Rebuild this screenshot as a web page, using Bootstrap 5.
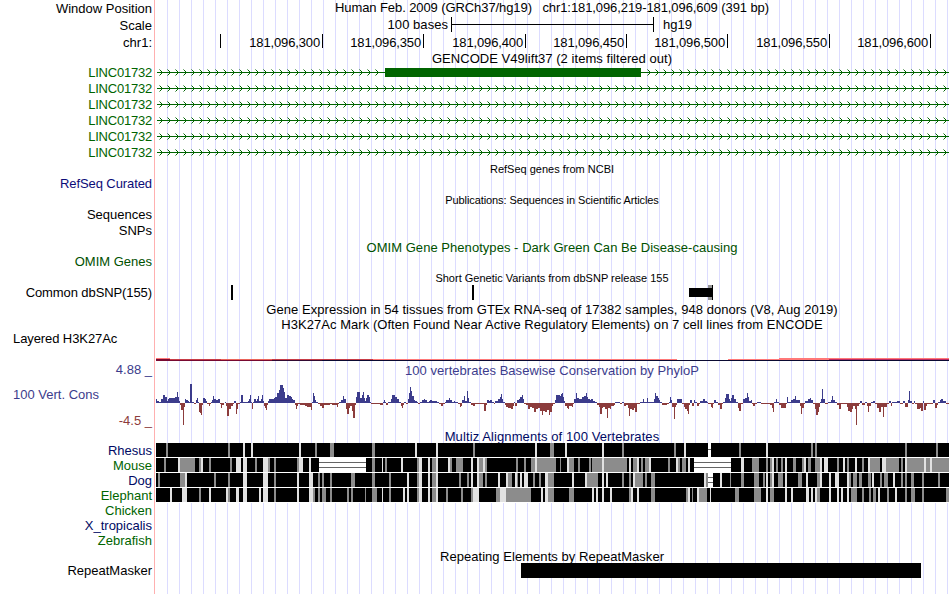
<!DOCTYPE html>
<html lang="en">
<head>
<meta charset="utf-8">
<title>Genome Browser tracks</title>
<link rel="stylesheet" href="https://cdn.jsdelivr.net/npm/bootstrap@5.3.0/dist/css/bootstrap.min.css">
<style>
body{font-family:"Liberation Sans",Arial,sans-serif;font-size:13px;color:#000;background:#fff;overflow:hidden}
.browser{width:949px;height:594px}
.trk{flex:none;white-space:pre;line-height:15px}
.lbl{width:155px;padding-right:2px;border-right:1px solid #ffb0b0;flex:none}
.raise{line-height:13px}
.plot{width:794px;flex:none;letter-spacing:.045px;background:linear-gradient(90deg,#dcdcff 1px,transparent 1px) 12px 0/12px 100%}
.plot:not(.gene):not(.align){background:linear-gradient(#fff,#fff) 0 0/1px 100% no-repeat,linear-gradient(90deg,#dcdcff 1px,transparent 1px) 12px 0/12px 100%}
.gene{background:linear-gradient(#fff,#fff) 0 0/1px 100% no-repeat,linear-gradient(90deg,#dcdcff 1px,transparent 1px) 12px 0/12px 100%}
.plot svg{display:block;shape-rendering:crispEdges}
.plot svg text{font-size:13px}
#ruler text{letter-spacing:-.14px}
.plot svg .chev{shape-rendering:auto;fill:none;stroke:#006400;stroke-width:1}
.h14{height:14px}.h15{height:15px}.h16{height:16px}.h17{height:17px}.h30{height:30px}.h50{height:50px}.h33{height:33px}
.tiny{font-size:11px;letter-spacing:0}
.tight{letter-spacing:-.09px}
.gene-id{letter-spacing:-.22px}
.loose{letter-spacing:.1px}
.green{color:#006400}.omim{color:#005000}.navy{color:#0c0c78}.multi{color:#000a64}.cons{color:#3c3c8c}.neg{color:#8c3c3c}
.inset-l{padding-left:13px}
.up1{padding-bottom:2px}
.dn1{padding-top:2px}
</style>
<script src="https://cdn.jsdelivr.net/npm/bootstrap@5.3.0/dist/js/bootstrap.bundle.min.js"></script>
</head>
<body>
<main class="browser d-flex flex-column">
 <div class="trk d-flex h17"><div class="lbl d-flex align-items-center justify-content-end">Window Position</div><div class="plot tight d-flex align-items-center justify-content-center up1"><span>Human Feb. 2009 (GRCh37/hg19)   chr1:181,096,219-181,096,609 (391 bp)</span></div></div>
 <div class="trk d-flex h17"><div class="lbl d-flex align-items-center justify-content-end">Scale</div><div class="plot"><svg width="794" height="17" viewBox="155 17 794 17"><path d="M451 17h1v15h-1zM653 17h1v15h-1zM451 24h203v1H451z"/><text x="448" y="29" text-anchor="end">100 bases</text><text x="663" y="29">hg19</text></svg></div></div>
 <div class="trk d-flex h17"><div class="lbl d-flex align-items-center justify-content-end">chr1:</div><div class="plot"><svg id="ruler" width="794" height="17" viewBox="155 34 794 17"></svg></div></div>
 <div class="trk d-flex h14"><div class="lbl"></div><div class="plot d-flex align-items-center justify-content-center">GENCODE V49lift37 (2 items filtered out)</div></div>
 <div class="trk d-flex h16 green"><div class="lbl gene-id text-end">LINC01732</div><div class="plot gene" data-exon="385,641"></div></div>
 <div class="trk d-flex h16 green"><div class="lbl gene-id text-end">LINC01732</div><div class="plot gene"></div></div>
 <div class="trk d-flex h16 green"><div class="lbl gene-id text-end">LINC01732</div><div class="plot gene"></div></div>
 <div class="trk d-flex h16 green"><div class="lbl gene-id text-end">LINC01732</div><div class="plot gene"></div></div>
 <div class="trk d-flex h16 green"><div class="lbl gene-id text-end">LINC01732</div><div class="plot gene"></div></div>
 <div class="trk d-flex h16 green"><div class="lbl gene-id text-end">LINC01732</div><div class="plot gene"></div></div>
 <div class="trk d-flex h16"><div class="lbl"></div><div class="plot d-flex align-items-center justify-content-center tiny">RefSeq genes from NCBI</div></div>
 <div class="trk d-flex h15"><div class="lbl raise tight text-end navy">RefSeq Curated</div><div class="plot"></div></div>
 <div class="trk d-flex h16"><div class="lbl"></div><div class="plot d-flex align-items-center justify-content-center tiny tight">Publications: Sequences in Scientific Articles</div></div>
 <div class="trk d-flex h15"><div class="lbl raise text-end">Sequences</div><div class="plot"></div></div>
 <div class="trk d-flex h16"><div class="lbl text-end">SNPs</div><div class="plot"></div></div>
 <div class="trk d-flex h16 omim"><div class="lbl"></div><div class="plot d-flex align-items-center justify-content-center">OMIM Gene Phenotypes - Dark Green Can Be Disease-causing</div></div>
 <div class="trk d-flex h15 omim"><div class="lbl raise text-end">OMIM Genes</div><div class="plot"></div></div>
 <div class="trk d-flex h15"><div class="lbl"></div><div class="plot d-flex align-items-center justify-content-center tiny dn1">Short Genetic Variants from dbSNP release 155</div></div>
 <div class="trk d-flex h15"><div class="lbl tight text-end">Common dbSNP(155)</div><div class="plot"><svg width="794" height="15" viewBox="155 285 794 15"><path d="M231 285h2v15h-2zM472 285h2v15h-2z"/><path fill="#969696" d="M708 285h4v15h-4z"/><path d="M689 288h24v9h-24zM712 285h1v15h-1z"/></svg></div></div>
 <div class="trk d-flex h17"><div class="lbl"></div><div class="plot d-flex align-items-center justify-content-center dn1">Gene Expression in 54 tissues from GTEx RNA-seq of 17382 samples, 948 donors (V8, Aug 2019)</div></div>
 <div class="trk d-flex h15"><div class="lbl"></div><div class="plot d-flex align-items-center justify-content-center">H3K27Ac Mark (Often Found Near Active Regulatory Elements) on 7 cell lines from ENCODE</div></div>
 <div class="trk d-flex h30"><div class="lbl raise tight inset-l">Layered H3K27Ac</div><div class="plot"><svg width="794" height="30" viewBox="155 332 794 30">
  <path fill="#ff7878" d="M156 358h14v1h-14zM373 359h304v1H373zM728 359h51v1h-51zM779 358h170v1H779zM779 359h50v1h-50z"/>
  <path fill="#780a32" d="M156 359h14v1h-14zM156 360h116v1H156z"/><path fill="#c83c46" d="M170 359h51v1h-51zM272 359h101v1H272z"/><path fill="#eb645a" d="M221 359h51v1h-51z"/><path fill="#be2864" d="M829 359h120v1H829z"/>
  <path fill="#320a32" d="M272 360h50v1h-50z"/><path fill="#0a0a32" d="M322 360h627v1H322z"/></svg></div></div>
 <div class="trk d-flex h16 cons"><div class="lbl text-end">4.88 _</div><div class="plot d-flex align-items-center justify-content-center">100 vertebrates Basewise Conservation by PhyloP</div></div>
 <div class="trk d-flex h50 cons"><div class="lbl d-flex flex-column"><div class="h33 d-flex align-items-center inset-l">100 Vert. Cons</div><div class="neg text-end dn1">-4.5 _</div></div><div class="plot"><svg id="phylop" width="794" height="50" viewBox="155 378 794 50"></svg></div></div>
 <div class="trk d-flex h15 multi"><div class="lbl"></div><div class="plot loose d-flex align-items-center justify-content-center dn1">Multiz Alignments of 100 Vertebrates</div></div>
 <div class="trk d-flex h15 multi"><div class="lbl text-end">Rhesus</div><div class="plot align"></div></div>
 <div class="trk d-flex h15 green"><div class="lbl text-end">Mouse</div><div class="plot align"></div></div>
 <div class="trk d-flex h15 multi"><div class="lbl text-end">Dog</div><div class="plot align"></div></div>
 <div class="trk d-flex h15 green"><div class="lbl text-end">Elephant</div><div class="plot align"></div></div>
 <div class="trk d-flex h15 green"><div class="lbl text-end">Chicken</div><div class="plot"></div></div>
 <div class="trk d-flex h15 multi"><div class="lbl text-end">X_tropicalis</div><div class="plot"></div></div>
 <div class="trk d-flex h15 green"><div class="lbl text-end">Zebrafish</div><div class="plot"></div></div>
 <div class="trk d-flex h15"><div class="lbl"></div><div class="plot d-flex align-items-center justify-content-center dn1">Repeating Elements by RepeatMasker</div></div>
 <div class="trk d-flex h16"><div class="lbl text-end">RepeatMasker</div><div class="plot"><svg width="794" height="16" viewBox="155 563 794 16"><path d="M521 563h400v15H521z"/></svg></div></div>
 <div class="d-flex flex-fill"><div class="lbl"></div><div class="plot"></div></div>
</main>
<script>
// ruler: one tick every 50 bases, coordinate to its left
let ruler='<path d="M220 34h1v14h-1z"/>';
[322,423,525,626,727,829,930].forEach((x,i)=>{ruler+=`<path d="M${x} 34h1v14h-1z"/><text x="${x-2}" y="47" text-anchor="end">181,096,${300+50*i}</text>`});
document.getElementById('ruler').innerHTML=ruler;

// introns with strand arrows every 8px
document.querySelectorAll('.gene').forEach(el=>{
  const ex=(el.dataset.exon||'0,0').split(',').map(Number);
  let d='';
  for(let x=162;x<949;x+=8) if(x<ex[0]-4||x>ex[1]+4) d+=`M${x-2.5} 4.5l3 3l-3 3`;
  el.innerHTML=`<svg width="794" height="16" viewBox="155 0 794 16"><path fill="#006400" d="M157 7h792v1H157z"/><path class="chev" d="${d}"/>${ex[0]?`<path fill="#006400" d="M${ex[0]} 3H${ex[1]}v9H${ex[0]}z"/>`:''}</svg>`;
});

// conservation: "offset:score" steps in thirds of a pixel from each segment's origin
const segs=[[150,"18:4 21:2 27:1 33:4 39:8 46:6 50:2 54:4 57:5 76:6 81:11 85:6 88:2 91:-2 94:-7 98:-22 102:-4 105:4 108:3 113:2 118:1 120:19 126:1 132:-1 138:3 141:5 144:1 147:-9 150:-10 153:-12 156:-2 159:5 164:4 168:2 171:-1 177:-3 180:-1 183:1 187:3 189:7 193:4 198:3 205:4 210:-1 213:-5 217:-2 222:0 225:1 228:-3 232:-13 236:-6 243:-3 250:-1 253:2 257:-11 262:-6 265:-1 271:1 274:8 280:1 294:2 297:4 300:8 303:1 306:-6 309:1 312:4 317:2 321:4 324:7 328:2 333:4 336:8 339:2 342:-3 345:-5 348:-7 351:-2 354:2 357:4 372:5 376:6 380:10 386:13 390:18 398:15 402:11 406:5 411:8 417:7 423:6 427:4 430:3 435:-2 438:-6 441:-3 444:-1 450:-2 465:-3 471:-4 483:-7 486:1 489:10 493:7 496:3 499:1 503:-1 511:-3 517:-5 523:-2 540:-1 546:-2 561:-4 564:-1 568:1 574:3 579:7 583:4 588:-6 592:-11 596:-5 600:-3 606:-8 610:-15 614:-2 617:6 621:11 629:5 636:8 639:11 642:5 646:2 649:5 652:8 658:6 661:1 664:-1 690:-2 699:1 702:3 706:1 709:-2 714:1 723:4 726:8 735:6 740:4 747:1 752:-3 756:-5 759:-2 762:1 769:-1 774:4 777:10 780:16 783:12 787:7 791:3"],
[415,"0:2 6:1 9:-1 15:1 21:3 27:4 31:3 36:1 42:2 45:3 52:2 66:1 72:-1 79:-3 84:-1 90:1 94:3 102:5 106:3 112:1 117:2 121:1 129:-1 135:-4 139:-3 142:3 147:7 151:2 156:12 159:5 162:1 168:-2 175:-3 180:-1 208:-8 213:-2 217:3 222:2 226:3 232:1 237:-1 240:2 250:4 255:6 258:9 262:4 265:1 269:-2 273:-4 280:-5 289:-6 294:-3 297:1 301:-3 306:3 312:4 316:6 321:8 325:4 328:-1 333:-2 340:-6 346:-4 352:-5 358:-9 364:-6 370:-5 375:-8 380:-12 385:-8 390:-9 397:-7 402:-12 406:-9 410:-3 415:-1 420:3 423:8 436:7 438:9 442:10 445:6 448:2 451:-3 456:-5 460:-6 463:-3 471:-4 475:-1 478:4 483:10 486:5 492:4 500:6 508:7 513:10 516:6 519:4 525:3 529:4 533:2 540:1 545:-2 552:-4 556:-11 561:-5 565:-4 570:-6 576:-15 580:-5 585:-6 589:-3 597:-2 601:1 614:-1 620:1 627:-3 633:-2 638:-5 642:-13 646:-6 651:-7 657:-5 661:-9 665:-1 675:1 684:4 688:1 696:5 700:1 717:4 720:10 724:7 728:5 732:3 736:1 742:-2 757:-1 762:1 765:6 768:3 772:-4 777:-16 781:-4 784:-2 787:4"],
[680,"0:4 5:-1 11:-4 15:-6 20:-8 24:-11 28:-2 31:3 37:-3 42:3 46:1 52:-3 57:-1 61:2 70:4 75:2 81:1 84:-1 94:-4 97:-5 100:-1 103:3 109:1 115:-2 121:-6 125:-1 130:1 135:5 138:9 147:4 151:2 154:5 157:8 163:4 168:1 174:-5 178:-8 182:-1 190:4 195:5 200:10 204:6 207:2 212:3 216:-1 220:-3 226:-1 232:1 243:-1 270:-2 276:-5 279:-9 283:1 287:4 291:1 297:-2 302:-5 318:-1 321:6 325:1 333:3 339:4 345:7 348:3 355:3 361:-3 364:-11 367:-5 372:-1 376:2 384:4 390:5 394:3 399:-1 405:-6 408:-12 413:-9 417:-4 420:1 423:4 426:14 430:4 434:-1 445:1 453:3 456:7 460:3 464:1 472:-2 478:-6 484:-1 500:-4 505:-8 510:-9 515:-6 520:-3 525:-6 528:-22 532:-3 537:-1 541:2 545:-2 554:1 561:-3 565:-9 568:-3 573:1 580:2 585:-1 592:-5 597:-9 602:-4 609:-14 613:-4 620:-1 628:2 633:-3 637:1 651:2 660:-1 670:2 675:-4 684:3 687:12 691:2 697:-1 703:2 706:-1 711:-6 720:-5 724:-8 728:-2 730:2 733:-7 737:-3 742:-1 760:3 766:-5 770:-2 775:1 781:3 784:4 789:2 799:-1"]];
const pts=[];
segs.forEach(([o,s])=>s.split(' ').forEach(p=>{const [x,h]=p.split(':').map(Number);pts.push([Math.round(o+x/3),h])}));
pts.push([949,0]);
let up='',dn='';
for(let i=0;i<pts.length-1;i++){const [x,h]=pts[i],e=pts[i+1][0];
  if(h>0) up+=`M${x} 403V${403-h}H${e}V403z`; else if(h<0) dn+=`M${x} 403V${403-h}H${e}V403z`;}
document.getElementById('phylop').innerHTML=`<path fill="#3c3c8c" d="${up}"/><path fill="#8c3c3c" d="${dn}"/>`;

// alignments: offset + shade (g mid, l light, w gap) + width, in thirds of a pixel
const aln=[
["48g6 234g6 279l6 303l6 447l6 495g6 540g12 666g9 795l6","0l6 63l6 174g6 360l6 405g12 450l6 561l6 621g6 777g6","12l6 84w9 177g6 258l6 393g6 405g6 675g6 768g6"],
["42g6 84l6 90g45 147g6 153l6 177g6 240g6 258l15 279l12 315g6 339l15 354g6 372g6 441g6 447l12 477l6 508w140 666g9 696l3 705g6 753l6 800g6","6g6 12l9 39l6 51g12 63l6 99l6 105g6 123g21 168l6 186l6 192g12 204l6 210g6 303g6 327g6 348g12 360l6 366g57 435g3 456l6 462g15 489g6 522g6 531g105 561l6 642l6 654g12 666l6 678g6 690g12 702l6 759g6 783l6 789g6","6g12 24l6 42w111 183l9 216g21 258g6 270g6 276l6 288g6 303g6 315l6 339g9 366g6 372l6 384g9 405g15 420l6 432l12 471g6 489l6 501g6 525l6 546g6 564l6 570g30 606l12 618g39 663g6 675l6 681g126 732l6 750l6"],
["24g6 90g15 105l6 192g6 234g6 279l12 339l15 372g6 441l6 477l12 504g6 516g6 540g6 603g12 666g9 717g6 771l6 801g6","6g6 12l9 39l6 51g12 63l6 132g6 156g6 168l6 186l6 192g12 210g6 249l6 273l6 279g12 300l6 306g3 315l6 327l12 354g6 372g6 390l9 399g18 471l6 510l6 516g33 561l6 573l6 621g6 642g6 654l6 660g24 690g6 708g12","72l6 78g6 84w15 120l6 150g3 183g9 222g15 249g6 258l6 270g6 276l6 294g15 315l6 354g12 378l6 411g9 420l6 447l6 465l12 501l6 507g6 519g12 537g9 564g9 576l6 600g6 612g12 639l6 663g6 675g6 693g9 726g6 774g6"],
["60l6 96l15 147g6 177l6 228l6 234g6 258l9 279l12 327l6 339l15 372g6 441l6 477l12 489g6 504g6 516g12 540g6 591g6 603g6 645g3 666g15 696l3 717g6 759l6 771l6 801g6","6g6 12l9 39l6 51g12 63l6 93g6 138g6 168g6 174l18 243g12 255l18 273g75 378l6 390l9 399g18 462g15 531l6 543l6 561l6 585l6 642g6 648l6 666l6 708g12","18g6 24l6 36g3 51l6 57g24 90l3 165g12 222g21 258l6 270g12 315l6 333l6 378l9 393l6 405l6 411g9 447l6 471l6 483l6 501l6 513g18 546g6 567g6 579g9 594l6 621g6 645l6 675g6 693g12 726g6 798g9"]];
const shade={g:'#8c8c8c',l:'#e1e1e1',w:'#ffffff'};
document.querySelectorAll('.align').forEach((el,r)=>{
  let s='<rect x="155" y="0" width="794" height="15" fill="#fff"/><path d="M156 0h793v14H156z"/>';
  aln[r].forEach((t,k)=>t.split(' ').forEach(p=>{
    const m=p.match(/(\d+)([glw])(\d+)/),x=Math.round([150,415,680][k]+m[1]/3),w=Math.round(m[3]/3);
    s+=`<rect x="${x}" y="0" width="${w}" height="14" fill="${shade[m[2]]}"/>`;
    if(m[2]=='w') (r?[4,9]:[6]).forEach(y=>s+=`<rect x="${x}" y="${y}" width="${w}" height="1" fill="#646464"/>`);
  }));
  el.innerHTML=`<svg width="794" height="15" viewBox="155 0 794 15">${s}</svg>`;
});
</script>
</body>
</html>
